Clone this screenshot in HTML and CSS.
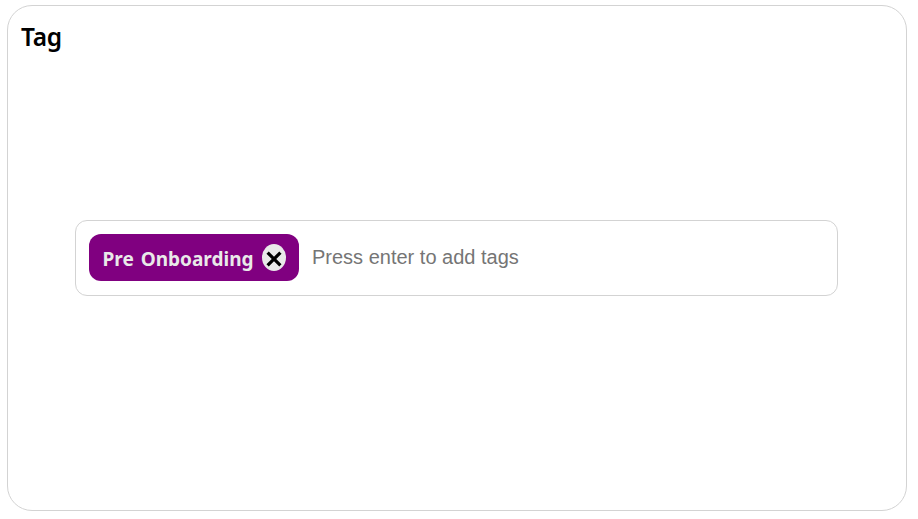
FILE: index.html
```html
<!DOCTYPE html>
<html lang="en">
<head>
<meta charset="utf-8">
<title>Tag</title>
<link rel="stylesheet" href="styles.css">
</head>
<body>
<section class="card">
<h1 class="title">Tag</h1>
<div class="tag-box">
<div class="tag"><span class="tag-label">Pre Onboarding</span><button class="remove" type="button" aria-label="Remove tag"><svg width="16" height="16" viewBox="0 0 16 16"><path d="M1.6 1.6L14.4 14.4M14.4 1.6L1.6 14.4" stroke="#000" stroke-width="3.2"/></svg></button></div>
<input class="tag-input" type="text" placeholder="Press enter to add tags">
</div>
</section>
</body>
</html>
```
FILE: styles.css
```css
* { box-sizing: border-box; }
body { margin: 0; padding: 5px 11px 8px 7px; background: #fff; }
.card {
  height: 506px;
  border: 1px solid #d3d3d3;
  border-radius: 25px;
  padding: 13px 68px 0 67px;
}
.title {
  margin: 0 0 0 -54px;
  height: 36px;
  font: 600 24.5px/36px "Noto Sans", sans-serif;
  letter-spacing: -0.3px;
}
.tag-box {
  display: flex;
  align-items: flex-start;
  margin-top: 165px;
  height: 76px;
  padding: 13px 13px 0;
  border: 1px solid #d3d3d3;
  border-radius: 12px;
}
.tag {
  display: flex;
  align-items: flex-start;
  width: 210px;
  height: 47px;
  padding: 10px 13px 0;
  justify-content: space-between;
  border-radius: 12px;
  background: #800080;
  color: #e9e9e9;
}
.tag-label {
  padding: 1px 0 0 0.5px;
  font: 700 19px/28px "Noto Sans", sans-serif;
  word-spacing: 2px;
  white-space: nowrap;
}
.remove {
  display: flex;
  align-items: center;
  justify-content: center;
  width: 24px;
  height: 27px;
  padding: 3px 0 0;
  border: 0;
  border-radius: 50%;
  background: #e9e9e9;
}
.tag-input {
  flex: 1;
  margin: 11px 0 0 13px;
  padding: 0;
  border: 0;
  outline: 0;
  background: transparent;
  font: 20px/24px "Liberation Sans", Arial, sans-serif;
}
.tag-input::placeholder { color: #757575; }
```
